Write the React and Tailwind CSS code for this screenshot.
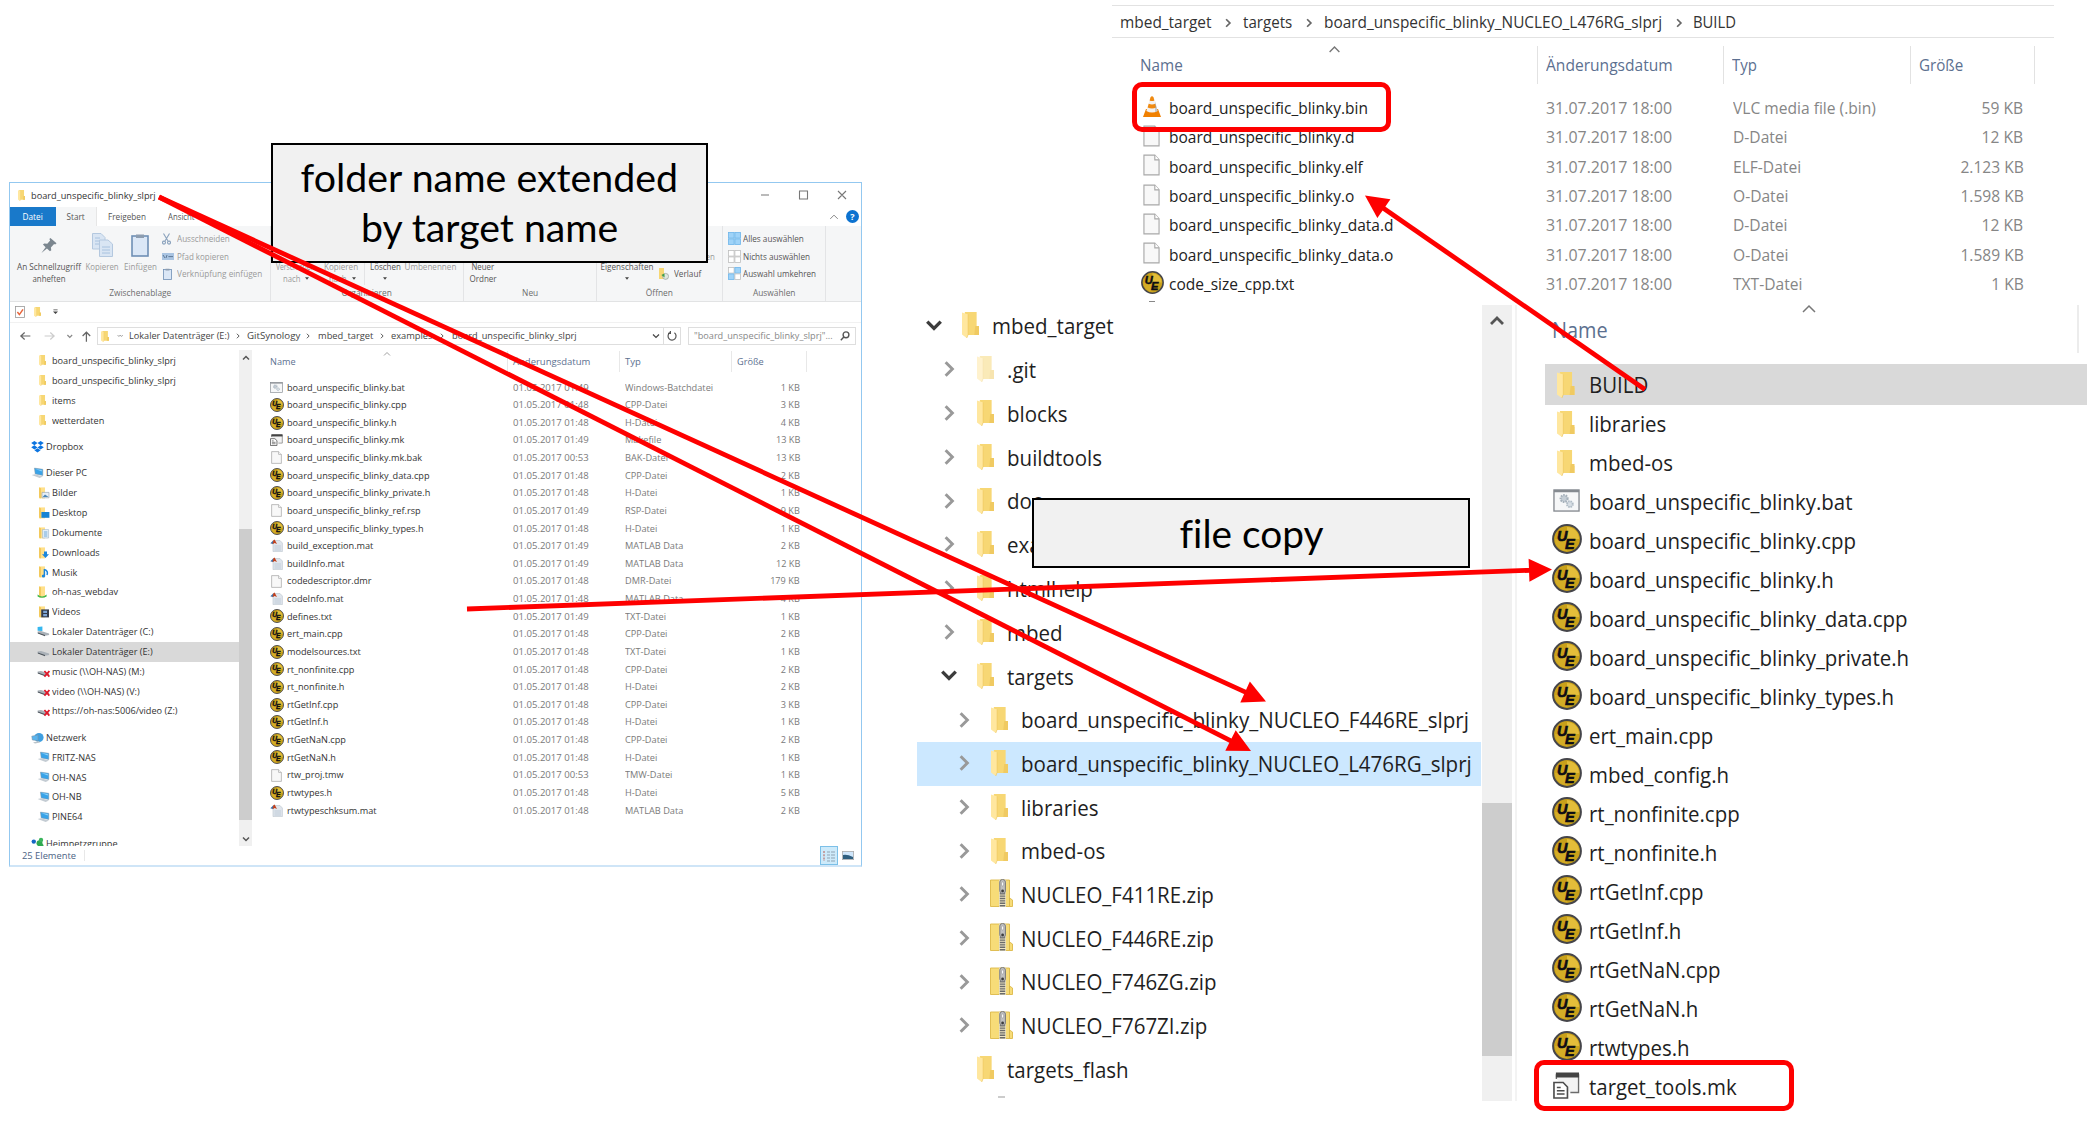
import { useLayoutEffect, useRef, useState } from "react";

/* Text squeezed or stretched horizontally to the width w; without w it takes the ratio k0. */
function T({ children, w, k0 = 0.963, className = "" }) {
  const ref = useRef(null);
  const [k, setK] = useState(k0);
  useLayoutEffect(() => {
    if (w && ref.current) setK(w / ref.current.offsetWidth);
  }, [w]);
  return (
    <span ref={ref} className={"inline-block whitespace-pre " + className} style={{ transform: `scaleX(${k})` }}>
      {children}
    </span>
  );
}
const L = (p) => <T {...p} className={"origin-left " + (p.className || "")} />;
const C = (p) => <T {...p} className={"origin-center " + (p.className || "")} />;
const R = (p) => <T {...p} className={"origin-right " + (p.className || "")} />;

/* ---------- icons ---------- */
const Folder = ({ className = "", light = false }) => (
  <svg viewBox="0 0 18 26" preserveAspectRatio="none" className={className} opacity={light ? 0.5 : 1}>
    <path d="M3 0H15.5V14L18 16V23H3Z" fill="#f7d774" />
    <path d="M14 14H18V23H13Z" fill="#f0ca62" />
    <path d="M0 0.6L6.5 2.5V22.5L5 26L0 22.5Z" fill="#ffe79f" />
    <path d="M6.5 2.5V22.5L5 26" fill="none" stroke="#eec65c" strokeWidth="0.7" />
  </svg>
);
const UE = ({ className = "" }) => (
  <svg viewBox="0 0 30 30" className={className}>
    <circle cx="15" cy="15" r="13.9" fill="#c9a11a" stroke="#45454a" strokeWidth="2" />
    <path d="M15 15V3A12 12 0 0 1 27 15Z" fill="#e3bd3a" />
    <path d="M15 15V27A12 12 0 0 1 3 15Z" fill="#dcb52f" opacity=".6" />
    <text x="5" y="16.5" fontFamily="Liberation Sans" fontWeight="700" fontStyle="italic" fontSize="14.5" fill="#0c0c14" stroke="#0c0c14" strokeWidth=".6">U</text>
    <text x="13" y="24.5" fontFamily="Liberation Sans" fontWeight="700" fontStyle="italic" fontSize="14.5" fill="#0c0c14" stroke="#0c0c14" strokeWidth=".6">E</text>
  </svg>
);
const Doc = ({ className = "" }) => (
  <svg viewBox="0 0 18 21" preserveAspectRatio="none" className={className}>
    <path d="M1 1H12.5L17 5.5V20H1Z" fill="#f8f8f8" stroke="#a8a8a8" strokeWidth="1.2" />
    <path d="M12.5 1V5.5H17" fill="#fff" stroke="#a8a8a8" strokeWidth="1.2" />
  </svg>
);
const Bat = ({ className = "" }) => (
  <svg viewBox="0 0 28 24" preserveAspectRatio="none" className={className}>
    <rect x="1" y="1" width="26" height="22" fill="#f6f7f8" stroke="#858a90" strokeWidth="1.4" />
    <path d="M1 2.2H27" stroke="#858a90" strokeWidth="2.4" />
    <circle cx="11.5" cy="10" r="3.6" fill="#c5ced6" stroke="#a5b0ba" strokeWidth="2.2" strokeDasharray="1.6 1" />
    <circle cx="17.5" cy="15.8" r="3" fill="#d8dfe5" stroke="#aebac4" strokeWidth="2" strokeDasharray="1.5 .9" />
  </svg>
);
const Mk = ({ className = "" }) => (
  <svg viewBox="0 0 28 27" preserveAspectRatio="none" className={className}>
    <path d="M3.5 7V3H26.5V20.5H18" fill="#f3f3f3" stroke="#6b6b6b" strokeWidth="1.4" />
    <rect x="3" y="0.5" width="24" height="5" fill="#444" />
    <path d="M1 10.5H10.5L15 15V26H1Z" fill="#fff" stroke="#4d4d4d" strokeWidth="1.7" />
    <path d="M4 15.5H8M4 18.7H12M4 22H12" stroke="#4d4d4d" strokeWidth="1.5" />
  </svg>
);
const Mat = ({ className = "" }) => (
  <svg viewBox="0 0 13 13" className={className}>
    <path d="M3 1.5H10L12.4 4V12.6H3Z" fill="#dfe5ec" stroke="#b9c2cc" strokeWidth=".6" />
    <path d="M4.5 7H11M4.5 9H11M4.5 11H11" stroke="#b4c3d3" strokeWidth=".7" />
    <path d="M0.4 4.2L3.2 1.6L4.2 3.6L2.6 5Z" fill="#3d6ea5" />
    <path d="M3.4 1.2L4.6 0.4L7 5L4.6 4L2.6 5.2Z" fill="#c2401c" />
  </svg>
);
const Cone = ({ className = "" }) => (
  <svg viewBox="0 0 18 21" className={className}>
    <path d="M3 13H15L18 21H0Z" fill="#f08000" />
    <path d="M7.6 1Q9 -.4 10.4 1L14.6 15Q9 18 3.4 15Z" fill="#f4f1ee" />
    <path d="M7.6 1Q9 -.4 10.4 1L11.4 4.4Q9 5.4 6.6 4.4Z" fill="#f08a10" />
    <path d="M5.7 7.7Q9 9.2 12.3 7.7L13.4 11.4Q9 13.6 4.6 11.4Z" fill="#f08a10" />
    <path d="M12 5L14.6 15L12 16Z" fill="#9aa0a6" opacity=".5" />
  </svg>
);
const Zip = ({ className = "" }) => (
  <svg viewBox="0 0 23 28" className={className}>
    <path d="M0.5 1H19.5V19L22.5 21V27.5H0.5Z" fill="#f7dc78" stroke="#dcb948" strokeWidth=".9" />
    <path d="M19.5 19V27" stroke="#dcb948" />
    <rect x="9" y="1" width="7" height="27" fill="#efe6c4" />
    <path d="M12.5 14V28" stroke="#6b6b6b" strokeWidth="5.4" strokeDasharray="1.4 1" />
    <rect x="9.8" y="0.5" width="5.6" height="14" rx="2.6" fill="#bfbfbf" stroke="#777" strokeWidth="1" />
    <rect x="11.6" y="3" width="2" height="4" rx="1" fill="#fff" stroke="#888" strokeWidth=".5" />
    <circle cx="12.6" cy="12" r="1.4" fill="#3c3c3c" />
  </svg>
);
const Chev = ({ d, className = "", sw = 3 }) => (
  <svg viewBox="0 0 16 16" className={className} fill="none" stroke="currentColor" strokeWidth={sw}>
    <path d={d} />
  </svg>
);
const UP = "M2 11L8 5L14 11";
const DOWN = "M2 5L8 11L14 5";
const RIGHT = "M5 2L11 8L5 14";

const Monitor = ({ className = "" }) => (
  <svg viewBox="0 0 13 11" className={className}>
    <path d="M3.4 0.6L11.8 1.8V8L4.2 6.4Z" fill="#39a3e8" stroke="#8a98a5" strokeWidth=".5" />
    <path d="M4.4 1.6L10.8 2.4V4Z" fill="#8fd3fb" />
    <path d="M0.6 7.6L4 6.8L12 8.9L8.6 10.4Z" fill="#c4ccd3" />
  </svg>
);
const NavIcon = ({ kind }) => {
  const cls = "h-[12px] w-[13px] shrink-0";
  if (kind === "folder") return <Folder className="ml-[2px] mr-[4px] h-[11px] w-[7px] shrink-0" />;
  if (kind === "pc") return <Monitor className={cls} />;
  if (kind === "dropbox")
    return (
      <svg viewBox="0 0 13 12" className={cls} fill="#0b74e0">
        <path d="M3.4 0L6.5 2L3.4 4.2L0.2 2.1ZM9.6 0L6.5 2L9.6 4.2L12.8 2.1ZM3.4 4.2L6.5 6.4L3.4 8.4L0.2 6.3ZM9.6 4.2L6.5 6.4L9.6 8.4L12.8 6.3ZM3.4 9.2L6.5 7.2L9.6 9.2L6.5 11.4Z" />
      </svg>
    );
  if (kind === "net")
    return (
      <svg viewBox="0 0 13 12" className={cls}>
        <circle cx="8" cy="5.5" r="4.6" fill="#3f9fe0" />
        <path d="M0.8 4.2L7 3V8.6L1.4 8Z" fill="#58b4ee" stroke="#7893a8" strokeWidth=".6" />
        <path d="M2 10.4L8 9L9 10.6L4 11.6Z" fill="#b9c2c9" />
      </svg>
    );
  if (kind === "home")
    return (
      <svg viewBox="0 0 13 12" className={cls}>
        <circle cx="2.8" cy="4.6" r="2.2" fill="#1667c4" />
        <circle cx="8.5" cy="6.2" r="3" fill="#2fa84f" />
        <circle cx="10" cy="3" r="2.2" fill="#3bb55d" />
        <circle cx="10.4" cy="9" r="2.2" fill="#2fa84f" />
      </svg>
    );
  if (kind === "drive" || kind === "sys" || kind === "off")
    return (
      <svg viewBox="0 0 13 12" className={cls}>
        <path d="M0.6 5.6L4 5L12 7.4L12.2 9L8 9.8L0.8 7.2Z" fill="#aab1b8" />
        <path d="M0.8 6.4L8 9V10.2L0.8 7.6Z" fill="#4d545b" />
        {kind === "sys" && <path d="M0.6 1L5.4 0.6V5L0.6 4.8Z" fill="#35b7ef" />}
        {kind === "off" && <path d="M7.4 5L12.4 10.6M12.4 5L7.4 10.6" stroke="#e0192b" strokeWidth="1.8" />}
      </svg>
    );
  return (
    <svg viewBox="0 0 13 12" className={cls}>
      <path d="M2 0.4H8V11.4H2Z" fill="#ffe08a" />
      <path d="M2 0.4L4 1.2V11.4L2 10.6Z" fill="#f3c95c" />
      {kind === "pic" && <path d="M5 5.4H12V10.8H5Z" fill="#e7eff6" stroke="#8b9cab" strokeWidth=".6" />}
      {kind === "pic" && <path d="M5.6 10L8 7.4L11.6 10Z" fill="#4a86b8" />}
      {kind === "desk" && <path d="M4.4 5H12.4V10.8H4.4Z" fill="#1583d4" />}
      {kind === "docs" && <path d="M5.4 2.6H11.6V11H5.4Z" fill="#e9f2fa" stroke="#9ab0c3" strokeWidth=".6" />}
      {kind === "docs" && <path d="M6.8 5H10.4M6.8 7H10.4M6.8 9H10.4" stroke="#4994d0" strokeWidth=".8" />}
      {kind === "down" && <path d="M7 4.4H10V7.2H12L8.5 11L5 7.2H7Z" fill="#1b86dc" />}
      {kind === "music" && <path d="M7.4 3V10.4M7.4 3.4Q11.6 5 10 9" stroke="#1b86dc" strokeWidth="1.5" fill="none" />}
      {kind === "music" && <circle cx="6.4" cy="10" r="1.6" fill="#1b86dc" />}
      {kind === "dav" && <path d="M0.6 8.4Q5 12.6 9.6 8.4V10.4Q5 13 0.6 10.4Z" fill="#3fb74a" />}
      {kind === "video" && <path d="M4.2 3.4H12V11.4H4.2Z" fill="#343c4c" />}
      {kind === "video" && <path d="M6.2 4.8H10V7H6.2ZM6.2 8H10V10.2H6.2Z" fill="#7fa7d6" />}
    </svg>
  );
};

/* ---------- explorer window ---------- */
const nav = [
  ["folder", "board_unspecific_blinky_slprj", 1],
  ["folder", "board_unspecific_blinky_slprj", 1],
  ["folder", "items", 1],
  ["folder", "wetterdaten", 1],
  ["dropbox", "Dropbox", 0],
  ["pc", "Dieser PC", 0],
  ["pic", "Bilder", 1],
  ["desk", "Desktop", 1],
  ["docs", "Dokumente", 1],
  ["down", "Downloads", 1],
  ["music", "Musik", 1],
  ["dav", "oh-nas_webdav", 1],
  ["video", "Videos", 1],
  ["sys", "Lokaler Datenträger (C:)", 1],
  ["drive", "Lokaler Datenträger (E:)", 1],
  ["off", "music (\\\\OH-NAS) (M:)", 1],
  ["off", "video (\\\\OH-NAS) (V:)", 1],
  ["off", "https://oh-nas:5006/video (Z:)", 1],
  ["net", "Netzwerk", 0],
  ["pc", "FRITZ-NAS", 1],
  ["pc", "OH-NAS", 1],
  ["pc", "OH-NB", 1],
  ["pc", "PINE64", 1],
  ["home", "Heimnetzgruppe", 0],
];
const files = [
  ["bat", "board_unspecific_blinky.bat", "01:49", "Windows-Batchdatei", "1"],
  ["ue", "board_unspecific_blinky.cpp", "01:48", "CPP-Datei", "3"],
  ["ue", "board_unspecific_blinky.h", "01:48", "H-Datei", "4"],
  ["mk", "board_unspecific_blinky.mk", "01:49", "Makefile", "13"],
  ["doc", "board_unspecific_blinky.mk.bak", "00:53", "BAK-Datei", "13"],
  ["ue", "board_unspecific_blinky_data.cpp", "01:48", "CPP-Datei", "2"],
  ["ue", "board_unspecific_blinky_private.h", "01:48", "H-Datei", "1"],
  ["doc", "board_unspecific_blinky_ref.rsp", "01:49", "RSP-Datei", "9"],
  ["ue", "board_unspecific_blinky_types.h", "01:48", "H-Datei", "1"],
  ["mat", "build_exception.mat", "01:49", "MATLAB Data", "2"],
  ["mat", "buildInfo.mat", "01:49", "MATLAB Data", "12"],
  ["doc", "codedescriptor.dmr", "01:48", "DMR-Datei", "179"],
  ["mat", "codeInfo.mat", "01:48", "MATLAB Data", "4"],
  ["ue", "defines.txt", "01:49", "TXT-Datei", "1"],
  ["ue", "ert_main.cpp", "01:48", "CPP-Datei", "2"],
  ["ue", "modelsources.txt", "01:48", "TXT-Datei", "1"],
  ["ue", "rt_nonfinite.cpp", "01:48", "CPP-Datei", "2"],
  ["ue", "rt_nonfinite.h", "01:48", "H-Datei", "2"],
  ["ue", "rtGetInf.cpp", "01:48", "CPP-Datei", "3"],
  ["ue", "rtGetInf.h", "01:48", "H-Datei", "1"],
  ["ue", "rtGetNaN.cpp", "01:48", "CPP-Datei", "2"],
  ["ue", "rtGetNaN.h", "01:48", "H-Datei", "1"],
  ["doc", "rtw_proj.tmw", "00:53", "TMW-Datei", "1"],
  ["ue", "rtwtypes.h", "01:48", "H-Datei", "5"],
  ["mat", "rtwtypeschksum.mat", "01:48", "MATLAB Data", "2"],
];
const smallIcon = {
  ue: <UE className="h-[14px] w-[14px]" />,
  bat: <Bat className="h-[11px] w-[13px]" />,
  mk: <Mk className="h-[12px] w-[13px]" />,
  doc: <Doc className="ml-[1px] h-[13px] w-[11px]" />,
  mat: <Mat className="h-[13px] w-[13px]" />,
};

const Tri = () => (
  <svg viewBox="0 0 6 4" className="h-[3px] w-[4px]" fill="#444">
    <path d="M0 0H6L3 4Z" />
  </svg>
);
const Big = ({ icon, lines, width, dim, tri }) => (
  <div className={"flex shrink-0 flex-col items-center " + width + (dim ? " text-[#9a9a9a]" : " text-[#555]")}>
    <div className="flex h-[35px] w-full items-center justify-center pt-[3px]">{icon}</div>
    {lines.map(([t, w], i) => (
      <div key={i} className="flex h-[11.5px] items-center justify-center gap-[3px] leading-[11.5px]">
        {t && <C w={w}>{t}</C>}
        {tri === i && <Tri />}
      </div>
    ))}
  </div>
);
const Small = ({ icon, children, w, dim }) => (
  <div className={"flex h-[17.6px] items-center " + (dim ? "text-[#9a9a9a]" : "text-[#555]")}>
    <div className="flex w-[15px] shrink-0 items-center">{icon}</div>
    <L w={w}>{children}</L>
  </div>
);
const Group = ({ width, label, children }) => (
  <div className={"flex shrink-0 flex-col overflow-hidden border-r border-[#e3e4e6] " + width}>
    <div className="flex h-[60px]">{children}</div>
    <div className="flex h-[16px] items-center justify-center text-[#6d6d6d]">
      <C k0={0.88}>{label}</C>
    </div>
  </div>
);
const Tiles = ({ fills }) => (
  <svg viewBox="0 0 13 13" className="h-[13px] w-[13px]">
    {fills.map((f, i) => (
      <rect key={i} x={0.5 + (i % 2) * 6.4} y={0.5 + Math.floor(i / 2) * 6.4} width="5.6" height="5.6" fill={f ? "#9fd3f8" : "#fff"} stroke={f ? "#6db5ea" : "#bdbdbd"} strokeWidth=".8" />
    ))}
  </svg>
);
const Clip = ({ className }) => (
  <svg viewBox="0 0 18 24" className={className}>
    <rect x="1" y="3" width="16" height="20" fill="#dbe7f6" stroke="#6f8fb5" strokeWidth="1.6" />
    <path d="M5 1.5H13V5H5Z" fill="#8d9db0" />
  </svg>
);
const CopyIcon = () => (
  <svg viewBox="0 0 21 24" className="h-[24px] w-[21px]" fill="#d9e5f3" stroke="#b4c8df">
    <path d="M0.5 0.5H9L13 4.5V16H0.5Z" />
    <path d="M7.5 7H16L20.5 11V23.5H7.5Z" />
    <path d="M10 14H18M10 17H18M10 20H18M3 5H8M3 8H7M3 11H7" stroke="#a8c2df" />
  </svg>
);

const Sep = () => <Chev d={RIGHT} className="h-[6px] w-[6px] shrink-0 text-[#555]" sw={2.6} />;

function Ribbon() {
  return (
    <div className="flex h-[76px] shrink-0 border-b border-[#e2e3e4] bg-[#f5f6f7]">
      <Group width="w-[261px]" label="Zwischenablage">
        <Big
          width="ml-[4px] w-[70px]"
          lines={[["An Schnellzugriff", 64], ["anheften", 33]]}
          icon={
            <svg viewBox="0 0 18 18" className="h-[17px] w-[18px]" fill="#7b868f">
              <path d="M10.5 1L17 6.5L15.5 8L14.4 7.4L11 11L11.4 14L10 15.2L6.8 12.2L1 17L5.4 10.8L2.6 8L4 6.8L7.2 7.2L10.2 3.8L9.4 2.2Z" />
            </svg>
          }
        />
        <Big width="w-[37px]" dim lines={[["Kopieren", 33]]} icon={<CopyIcon />} />
        <Big width="w-[38px]" dim lines={[["Einfügen", 33]]} icon={<Clip className="h-[24px] w-[18px]" />} />
        <div className="ml-[3px] pt-[4px]">
          <Small
            dim
            w={53}
            icon={
              <svg viewBox="0 0 9 12" className="h-[12px] w-[9px]" fill="none" stroke="#8aa2bd" strokeWidth="1.1">
                <path d="M1.5 0.5L6 8M7.5 0.5L3 8" />
                <circle cx="2" cy="9.6" r="1.5" />
                <circle cx="7" cy="9.6" r="1.5" />
              </svg>
            }
          >
            Ausschneiden
          </Small>
          <Small
            dim
            w={52}
            icon={
              <svg viewBox="0 0 12 7" className="h-[7px] w-[12px]">
                <rect width="12" height="7" fill="#a9c4e2" />
                <path d="M1 2L3 5M5 2L4 5M6.4 3.6H11" stroke="#5d7896" />
              </svg>
            }
          >
            Pfad kopieren
          </Small>
          <Small dim w={85.5} icon={<Clip className="ml-[1px] h-[12px] w-[9px]" />}>
            Verknüpfung einfügen
          </Small>
        </div>
      </Group>
      <Group width="w-[193px]" label="Organisieren">
        <Big width="w-[48px]" dim lines={[["Verschieben", 39], ["nach", 17]]} tri={1} />
        <Big width="w-[46px] border-r border-[#e3e4e6]" dim lines={[["Kopieren", 34], ["nach", 17]]} tri={1} />
        <Big width="w-[40px]" lines={[["Löschen", 31], [""]]} tri={1} />
        <Big width="w-[50px]" dim lines={[["Umbenennen", 52]]} />
      </Group>
      <Group width="w-[133px]" label="Neu">
        <Big width="w-[38px]" lines={[["Neuer", 23], ["Ordner", 27]]} />
      </Group>
      <Group width="w-[126px]" label="Öffnen">
        <Big width="w-[60px]" lines={[["Eigenschaften", 53], [""]]} tri={1} />
        <div className="ml-[2px] pt-[4px]">
          <Small>Öffnen</Small>
          <Small dim w={41}>Bearbeiten</Small>
          <Small
            w={27.5}
            icon={
              <svg viewBox="0 0 11 12" className="-ml-[1px] h-[12px] w-[11px]">
                <path d="M1 0H6V11H1Z" fill="#f7d774" />
                <circle cx="7.6" cy="8.4" r="3" fill="#dfe6df" stroke="#8a948a" strokeWidth=".6" />
                <path d="M3.4 7L6.4 5.4L6.6 9.6Z" fill="#3f9e48" />
              </svg>
            }
          >
            Verlauf
          </Small>
        </div>
      </Group>
      <Group width="w-[103px]" label="Auswählen">
        <div className="ml-[5px] pt-[4px]">
          <Small w={61} icon={<Tiles fills={[1, 1, 1, 1]} />}>Alles auswählen</Small>
          <Small w={67} icon={<Tiles fills={[0, 0, 0, 0]} />}>Nichts auswählen</Small>
          <Small w={73.5} icon={<Tiles fills={[0, 1, 1, 0]} />}>Auswahl umkehren</Small>
        </div>
      </Group>
    </div>
  );
}

function AddressBar() {
  return (
    <div className="flex h-[28px] shrink-0 items-center border-t border-[#f1f1f1] pb-px text-[#444]">
      <svg viewBox="0 0 80 12" className="ml-[8px] h-[12px] w-[76px] shrink-0" fill="none" strokeWidth="1.3">
        <path d="M13 6H3M7 2.4L3 6L7 9.6" stroke="#666" />
        <path d="M28 6H38M34 2.4L38 6L34 9.6" stroke="#ccc" />
        <path d="M52 5L54.5 7.4L57 5" stroke="#888" />
        <path d="M72 12V2M68 6L72 2L76 6" stroke="#666" />
      </svg>
      <div className="ml-[3px] flex h-[18px] w-[584px] shrink-0 items-center border border-[#dedede]">
        <Folder className="ml-[3px] h-[11px] w-[8px]" />
        <Chev d="M2 6L5 9L8 6M9 6L12 9L15 6" sw={1.6} className="ml-[8px] h-[6px] w-[6px]" />
        <div className="ml-[6px] w-[106px]"><L w={101}>Lokaler Datenträger (E:)</L></div>
        <Sep />
        <div className="ml-[6px] w-[58px]"><L w={53}>GitSynology</L></div>
        <Sep />
        <div className="ml-[7px] w-[61px]"><L w={55}>mbed_target</L></div>
        <Sep />
        <div className="ml-[6px] w-[48px]"><L w={41}>examples</L></div>
        <Sep />
        <div className="ml-[7px] flex-1"><L w={125}>board_unspecific_blinky_slprj</L></div>
        <Chev d={DOWN} sw={2.4} className="mr-[3px] h-[8px] w-[8px]" />
        <div className="flex h-full w-[17px] items-center justify-center border-l border-[#dedede]">
          <svg viewBox="0 0 10 10" className="h-[10px] w-[10px]" fill="none" stroke="#555" strokeWidth="1.2">
            <path d="M3 1.6A4 4 0 1 0 7.4 1.8M3.4 0V2.4H1" />
          </svg>
        </div>
      </div>
      <div className="ml-[7px] flex h-[18px] w-[168px] items-center justify-between border border-[#dedede] px-[5px] text-[#888]">
        <L w={139}>"board_unspecific_blinky_slprj"...</L>
        <svg viewBox="0 0 10 10" className="h-[10px] w-[10px]" fill="none" stroke="#555" strokeWidth="1.4">
          <circle cx="6" cy="3.8" r="2.9" />
          <path d="M3.8 6L0.8 9.2" />
        </svg>
      </div>
    </div>
  );
}

function ExplorerWindow() {
  return (
    <div className="ml-[9px] mt-[182px] flex h-[685px] w-[853px] flex-col border border-b-2 border-[#93c8f0] border-b-[#cfe5f7] bg-white text-[9.5px] leading-none text-[#333]">
      <div className="flex h-[24px] shrink-0 items-center">
        <Folder className="ml-[8px] h-[11px] w-[7px]" />
        <div className="ml-[6px] flex-1 pt-px text-[#333]"><L w={125}>board_unspecific_blinky_slprj</L></div>
        <svg viewBox="0 0 100 10" className="mr-[7px] h-[10px] w-[100px]" fill="none" stroke="#777" strokeWidth="1.1">
          <path d="M7 5H15M45.500 1H53.5V9H45.500ZM84 1L92 9M92 1L84 9" />
        </svg>
      </div>
      <div className="flex h-[19px] shrink-0 items-center text-[#555]">
        <div className="flex h-full w-[46px] items-center justify-center bg-[#1979ca] text-white"><C w={20}>Datei</C></div>
        <div className="flex h-full w-[41px] items-center justify-center border-r border-[#e6e6e6] bg-[#f5f6f7]"><C w={18}>Start</C></div>
        <div className="ml-[11px] w-[60px]"><L w={38}>Freigeben</L></div>
        <div className="flex-1"><L w={27}>Ansicht</L></div>
        <Chev d={UP} sw={1.6} className="h-[10px] w-[10px] text-[#888]" />
        <div className="ml-[7px] mr-[2px] flex h-[13px] w-[13px] items-center justify-center rounded-full bg-[#0c72d0] text-[9px] font-bold text-white">?</div>
      </div>
      <Ribbon />
      <div className="flex h-[20px] shrink-0 items-center">
        <svg viewBox="0 0 10 12" className="ml-[5px] h-[12px] w-[10px]">
          <rect x=".5" y=".5" width="9" height="11" fill="#fff" stroke="#999" strokeWidth=".8" />
          <path d="M2.4 6L4.4 8.6L8 3.4" fill="none" stroke="#e8643a" strokeWidth="1.5" />
        </svg>
        <Folder className="ml-[9px] h-[10px] w-[7px]" />
        <svg viewBox="0 0 6 6" className="ml-[12px] h-[6px] w-[5px]" fill="#444">
          <path d="M0.500 0H5.500V1H0.500ZM0 2.500H6L3 5.500Z" />
        </svg>
      </div>
      <AddressBar />
      <div className="flex h-[496px] shrink-0">
        <div className="flex w-[229px] shrink-0 flex-col overflow-hidden pt-[1px]">
          {nav.map(([kind, name, lvl], i) => (
            <div
              key={i}
              className={
                "flex h-[19.83px] shrink-0 items-center " +
                (lvl ? "pl-[26.500px] " : "mt-[6.6px] pl-[20.500px] ") +
                (i === 14 ? "bg-[#d9d9d9]" : "")
              }
            >
              <NavIcon kind={kind} />
              <L className="ml-[2.500px]">{name}</L>
            </div>
          ))}
        </div>
        <div className="flex w-[13px] shrink-0 flex-col items-center justify-between bg-[#f0f0f0] text-[#555]">
          <Chev d={UP} className="mt-[4px] h-[8px] w-[8px]" />
          <div className="mt-[167px] h-[291px] w-full shrink-0 bg-[#cdcdcd]" />
          <Chev d={DOWN} className="mb-[3px] mt-auto h-[8px] w-[8px]" />
        </div>
        <div className="relative flex-1">
          <Chev d={UP} sw={1.6} className="absolute left-[131px] top-[0px] h-[8px] w-[8px] text-[#888]" />
          <div className="grid h-[22px] grid-cols-[256px_112px_112px_75px] items-center pt-px text-[#5c7090]">
            <div className="flex h-full items-center border-r border-[#e8e8e8] pl-[18px]"><L w={26}>Name</L></div>
            <div className="flex h-full items-center border-r border-[#e8e8e8] pl-[5px]"><L w={77}>Änderungsdatum</L></div>
            <div className="flex h-full items-center border-r border-[#e8e8e8] pl-[5px]"><L w={16}>Typ</L></div>
            <div className="flex h-full items-center border-r border-[#e8e8e8] pl-[5px]"><L w={27}>Größe</L></div>
          </div>
          <div className="pt-[6.500px]">
            {files.map(([icon, name, time, type, size], i) => (
              <div key={i} className="grid h-[17.64px] grid-cols-[256px_112px_112px_68px] items-center text-[#7a7a7a]">
                <div className="flex items-center pl-[18px] text-[#333]">
                  <div className="flex w-[17px] shrink-0">{smallIcon[icon]}</div>
                  <L>{name}</L>
                </div>
                <div className="pl-[5px]"><L w={75.5}>{"01.05.2017 " + time}</L></div>
                <div className="pl-[5px]"><L k0={0.97}>{type}</L></div>
                <div className="text-right"><R>{size + " KB"}</R></div>
              </div>
            ))}
          </div>
        </div>
      </div>
      <div className="flex h-[19px] items-center">
        <div className="ml-[12px] w-[63px] border-r border-[#e8e8e8] pt-px text-[#4c6384]"><L w={54}>25 Elemente</L></div>
        <div className="ml-auto flex h-[19px] w-[18px] items-center justify-center border border-[#7cc0e8] bg-[#cdeafa]">
          <svg viewBox="0 0 12 12" className="h-[12px] w-[12px]">
            <path d="M1 1V11" stroke="#c08f8f" strokeWidth="1.6" strokeDasharray="2 1.200" />
            <path d="M4 2H7M8 2H12M4 5H7M8 5H12M4 8H7M8 8H12M4 11H7M8 11H12" stroke="#8fa3b3" />
          </svg>
        </div>
        <svg viewBox="0 0 12 9" className="ml-[4px] mr-[7px] h-[9px] w-[12px]">
          <rect x=".4" y=".4" width="11.200" height="8.200" fill="#cfe6fb" stroke="#aaa" strokeWidth=".8" />
          <path d="M1 4Q5 3 11 6V8H1Z" fill="#2f5f7f" />
        </svg>
      </div>
    </div>
  );
}

/* ---------- build output list ---------- */
const build = [
  ["cone", "board_unspecific_blinky.bin", "VLC media file (.bin)", "59"],
  ["doc", "board_unspecific_blinky.d", "D-Datei", "12"],
  ["doc", "board_unspecific_blinky.elf", "ELF-Datei", "2.123"],
  ["doc", "board_unspecific_blinky.o", "O-Datei", "1.598"],
  ["doc", "board_unspecific_blinky_data.d", "D-Datei", "12"],
  ["doc", "board_unspecific_blinky_data.o", "O-Datei", "1.589"],
  ["ue", "code_size_cpp.txt", "TXT-Datei", "1"],
];
const Crumb = () => <Chev d={RIGHT} className="mt-px h-[10px] w-[10px] shrink-0 text-[#666]" sw={2.8} />;

function BuildPanel() {
  return (
    <div className="relative ml-[202px] h-[302px] w-[942px] overflow-hidden pt-[5px] text-[16.2px] leading-none text-[#222]">
      <div className="flex h-[33px] items-center border-y border-[#e2e2e2] pt-px text-[#333]">
        <div className="ml-[8px] w-[103px]"><L w={91.5}>mbed_target</L></div>
        <Crumb />
        <div className="ml-[10px] w-[61px]"><L w={49.5}>targets</L></div>
        <Crumb />
        <div className="ml-[10px] w-[350px]"><L w={338.5}>board_unspecific_blinky_NUCLEO_L476RG_slprj</L></div>
        <Crumb />
        <div className="ml-[9px]"><L w={43}>BUILD</L></div>
      </div>
      <Chev d={UP} sw={1.7} className="absolute left-[216px] top-[43px] h-[13px] w-[13px] text-[#777]" />
      <div className="mt-[8px] grid h-[38px] grid-cols-[426px_186px_187px_124px] text-[#5c7090]">
        <div className="flex items-center border-r border-[#e2e2e2] pl-[28px] pt-px"><L w={42.5}>Name</L></div>
        <div className="flex items-center border-r border-[#e2e2e2] pl-[8px] pt-px"><L w={127}>Änderungsdatum</L></div>
        <div className="flex items-center border-r border-[#e2e2e2] pl-[8px] pt-px"><L w={25}>Typ</L></div>
        <div className="flex items-center border-r border-[#e2e2e2] pl-[8px] pt-px"><L w={44}>Größe</L></div>
      </div>
      <div className="pt-[9.300px]">
        {build.map(([icon, name, type, size], i) => (
          <div key={i} className="grid h-[29.4px] grid-cols-[426px_186px_187px_112.5px] items-center text-[#868686]">
            <div className="flex items-center pl-[29px] text-[#222]">
              <div className="flex w-[27.500px] shrink-0 pl-[2px]">
                {icon === "cone" && <Cone className="-mt-[3px] h-[21px] w-[18px]" />}
                {icon === "doc" && <Doc className="-mt-[3px] h-[22px] w-[17px]" />}
                {icon === "ue" && <UE className="-ml-[2px] -mt-[3px] h-[23px] w-[23px]" />}
              </div>
              <L k0={0.957}>{name}</L>
            </div>
            <div className="pl-[8px]"><L w={126}>31.07.2017 18:00</L></div>
            <div className="pl-[9px]"><L>{type}</L></div>
            <div className="text-right"><R>{size + " KB"}</R></div>
          </div>
        ))}
      </div>
      <div className="ml-[37px] mt-[2px] h-[2px] w-[6px] bg-[#888]" />
    </div>
  );
}

/* ---------- folder tree ---------- */
const tree = [
  [0, "open", "folder", "mbed_target"],
  [1, "closed", "light", ".git"],
  [1, "closed", "folder", "blocks"],
  [1, "closed", "folder", "buildtools"],
  [1, "closed", "folder", "doc"],
  [1, "closed", "folder", "examples"],
  [1, "closed", "folder", "htmlhelp"],
  [1, "closed", "folder", "mbed"],
  [1, "open", "folder", "targets"],
  [2, "closed", "folder", "board_unspecific_blinky_NUCLEO_F446RE_slprj"],
  [2, "closed", "folder", "board_unspecific_blinky_NUCLEO_L476RG_slprj"],
  [2, "closed", "folder", "libraries"],
  [2, "closed", "folder", "mbed-os"],
  [2, "closed", "zip", "NUCLEO_F411RE.zip"],
  [2, "closed", "zip", "NUCLEO_F446RE.zip"],
  [2, "closed", "zip", "NUCLEO_F746ZG.zip"],
  [2, "closed", "zip", "NUCLEO_F767ZI.zip"],
  [1, "none", "folder", "targets_flash"],
];
const indent = ["pl-[8px]", "pl-[23px]", "pl-[37.5px]"];

function TreePanel() {
  return (
    <div className="flex text-[21.3px] leading-none text-[#1f1f1f]">
      <div className="w-[565px] pt-[2px]">
        {tree.map(([lvl, state, icon, name], i) => (
          <div key={i} className={"flex w-[564px] items-center " + indent[lvl] + (i === 12 ? " h-[43px]" : " h-[43.8px]") + (i === 10 ? " bg-[#cce8ff]" : "")}>
            <div className="flex w-[36.500px] shrink-0 items-center">
              {state === "open" && <Chev d={DOWN} className="-mt-[2px] h-[18px] w-[18px] text-[#3c3c3c]" sw={3} />}
              {state === "closed" && <Chev d={RIGHT} className="-mt-[1px] h-[18px] w-[18px] text-[#999]" sw={2.6} />}
            </div>
            <div className="flex w-[30px] shrink-0">
              {icon === "zip" ? <Zip className="-ml-[1.500px] -mt-[2px] h-[28px] w-[23px]" /> : <Folder light={icon === "light"} className="-mt-[1px] h-[26px] w-[17px]" />}
            </div>
            <L w={i === 9 ? 448 : i === 10 ? 451 : undefined}>{name}</L>
          </div>
        ))}
        <div className="ml-[81px] mt-[4px] h-[2px] w-[7px] bg-[#ccc]" />
      </div>
      <div className="mt-[3px] flex h-[796px] w-[30px] flex-col items-center bg-[#f0f0f0] text-[#555]">
        <Chev d={UP} className="mt-[8px] h-[16px] w-[16px]" sw={2.8} />
        <div className="mt-[474px] h-[253px] w-full bg-[#cdcdcd]" />
      </div>
      <div className="ml-[3px] mt-[3px] h-[796px] w-[2px] bg-[#f3f3f3]" />
    </div>
  );
}

/* ---------- target folder content ---------- */
const target = [
  ["folder", "BUILD"],
  ["folder", "libraries"],
  ["folder", "mbed-os"],
  ["bat", "board_unspecific_blinky.bat"],
  ["ue", "board_unspecific_blinky.cpp"],
  ["ue", "board_unspecific_blinky.h"],
  ["ue", "board_unspecific_blinky_data.cpp"],
  ["ue", "board_unspecific_blinky_private.h"],
  ["ue", "board_unspecific_blinky_types.h"],
  ["ue", "ert_main.cpp"],
  ["ue", "mbed_config.h"],
  ["ue", "rt_nonfinite.cpp"],
  ["ue", "rt_nonfinite.h"],
  ["ue", "rtGetInf.cpp"],
  ["ue", "rtGetInf.h"],
  ["ue", "rtGetNaN.cpp"],
  ["ue", "rtGetNaN.h"],
  ["ue", "rtwtypes.h"],
  ["mk", "target_tools.mk"],
];
function TargetPanel() {
  return (
    <div className="relative w-[549px] pt-[3px] text-[21.3px] leading-none text-[#1f1f1f]">
      <Chev d={UP} sw={1.5} className="absolute left-[256px] top-[-1px] h-[16px] w-[16px] text-[#777]" />
      <div className="flex h-[48px] w-[534px] items-center border-r-2 border-[#ececec] pl-[7px] pt-[2px] text-[#5c7090]">
        <L w={56}>Name</L>
      </div>
      <div className="pt-[12px]">
        {target.map(([icon, name], i) => (
          <div key={i} className={"flex h-[39px] w-[542px] items-center " + (i === 0 ? "bg-[#d9d9d9] shadow-[0_1px_0_#d9d9d9,0_-1px_0_#d9d9d9]" : "")}>
            <div className="flex w-[43.500px] shrink-0 pl-[7px]">
              {icon === "folder" && <Folder className="ml-[5px] h-[26px] w-[17.500px]" />}
              {icon === "bat" && <Bat className="ml-[1px] -mt-[3px] h-[23px] w-[27px]" />}
              {icon === "ue" && <UE className="-mt-[4px] h-[30px] w-[30px]" />}
              {icon === "mk" && <Mk className="ml-[1px] -mt-[3px] h-[27px] w-[27px]" />}
            </div>
            <L k0={0.96}>{name}</L>
          </div>
        ))}
      </div>
    </div>
  );
}

/* ---------- annotations ---------- */
const arrows = [
  [159, 197, 1266, 701.5],
  [159, 197, 1251, 751],
  [467, 609, 1552, 569.5],
  [1645, 389.5, 1365, 195.5],
];
function Arrows() {
  return (
    <svg className="absolute inset-0 h-[1126px] w-[2094px]" viewBox="0 0 2094 1126" fill="#fe0000" stroke="none">
      {arrows.map(([x1, y1, x2, y2], i) => {
        const len = Math.hypot(x2 - x1, y2 - y1);
        const ux = (x2 - x1) / len;
        const uy = (y2 - y1) / len;
        const bx = x2 - ux * 23;
        const by = y2 - uy * 23;
        return (
          <g key={i}>
            <line x1={x1} y1={y1} x2={bx + ux} y2={by + uy} stroke="#fe0000" strokeWidth="4.8" />
            <polygon points={`${x2},${y2} ${bx - uy * 11.5},${by + ux * 11.5} ${bx + uy * 11.5},${by - ux * 11.5}`} />
          </g>
        );
      })}
    </svg>
  );
}

export default function App() {
  return (
    <div className="relative flex h-[1126px] w-[2094px] overflow-hidden bg-white font-['Open_Sans',sans-serif] [font-variant-ligatures:none]">
      <div className="w-[917px] shrink-0">
        <ExplorerWindow />
      </div>
      <div className="-ml-[7px] w-[1184px] shrink-0">
        <BuildPanel />
        <div className="ml-[7px] flex">
          <TreePanel />
          <div className="ml-[28px]">
            <TargetPanel />
          </div>
        </div>
      </div>

      <div className="absolute left-[271px] top-[143px] flex h-[120px] w-[437px] flex-col items-center justify-center border-2 border-black bg-[#f1f1f1] pb-[2px] font-['Lato',sans-serif] text-[38px] leading-[50.5px] text-black">
        <C w={378}>folder name extended</C>
        <C w={257}>by target name</C>
      </div>
      <div className="absolute left-[1032px] top-[498px] flex h-[70px] w-[438px] items-center justify-center border-2 border-black bg-[#f1f1f1] pb-px font-['Lato',sans-serif] text-[38px] leading-none text-black">
        <C w={144}>file copy</C>
      </div>
      <div className="absolute left-[1132px] top-[82px] h-[50px] w-[259px] rounded-[10px] border-[5px] border-[#fe0000]" />
      <div className="absolute left-[1534px] top-[1060px] h-[51px] w-[260px] rounded-[10px] border-[5px] border-[#fe0000]" />
      <Arrows />
    </div>
  );
}
